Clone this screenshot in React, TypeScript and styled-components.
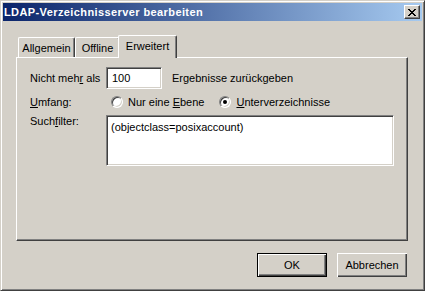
import React from "react";
import styled, { createGlobalStyle } from "styled-components";

const FACE = "#d4d0c8";
const FONT = `"Liberation Sans", Arial, sans-serif`;

const Global = createGlobalStyle`
  html, body { margin: 0; padding: 0; background: ${FACE}; }
  body { font-family: ${FONT}; font-size: 11px; color: #000; }
  * { box-sizing: border-box; }
`;

const Window = styled.div`
  width: 425px;
  height: 291px;
  display: flex;
  flex-direction: column;
  background: ${FACE};
  border: 1px solid;
  border-color: ${FACE} #404040 #404040 ${FACE};
  box-shadow: inset 1px 1px #fff, inset -1px -1px #808080;
  padding: 2px;
`;

const TitleBar = styled.div`
  height: 18px;
  flex: none;
  display: flex;
  align-items: center;
  justify-content: space-between;
  padding: 0 2px 0 1px;
  background: linear-gradient(to right, #0a246a, #a6caf0);
`;

const Title = styled.span`
  color: #fff;
  font-weight: bold;
  font-size: 11px;
  letter-spacing: 0.4px;
  white-space: nowrap;
`;

const CloseButton = styled.div`
  width: 16px;
  height: 14px;
  display: flex;
  align-items: center;
  justify-content: center;
  background: ${FACE};
  border: 1px solid;
  border-color: #fff #404040 #404040 #fff;
  box-shadow: inset -1px -1px #808080;
`;

const Client = styled.div`
  flex: 1;
  display: flex;
  flex-direction: column;
  padding: 14px 14px 11px 13px;
`;

const TabStrip = styled.div`
  display: flex;
  align-items: flex-end;
  height: 22px;
  padding-left: 2px;
  position: relative;
  z-index: 1;
`;

const Tab = styled.div<{ $active?: boolean; $w: number }>`
  width: ${(p) => p.$w}px;
  flex: none;
  height: ${(p) => (p.$active ? 23 : 20)}px;
  margin: 0 ${(p) => (p.$active ? -2 : 0)}px ${(p) => (p.$active ? -1 : 0)}px;
  display: flex;
  align-items: center;
  justify-content: center;
  padding-bottom: ${(p) => (p.$active ? 2 : 0)}px;
  background: ${FACE};
  border-top: 1px solid #fff;
  border-left: 1px solid #fff;
  border-right: 1px solid #404040;
  box-shadow: inset -1px 0 #808080;
  border-top-left-radius: 2px;
  border-top-right-radius: 2px;
  white-space: nowrap;
  position: relative;
  z-index: ${(p) => (p.$active ? 2 : 1)};
`;

const Panel = styled.div`
  flex: 1;
  border: 1px solid;
  border-color: #fff #404040 #404040 #fff;
  box-shadow: inset -1px -1px #808080;
  padding: 9px 12px 0 13px;
  display: flex;
  flex-direction: column;
`;

const Row = styled.div<{ $top?: boolean }>`
  display: flex;
  align-items: ${(p) => (p.$top ? "flex-start" : "center")};
`;

const Label = styled.span<{ $offset?: number }>`
  width: 76px;
  flex: none;
  white-space: nowrap;
  padding-top: ${(p) => p.$offset ?? 0}px;
`;

const Edit = styled.input`
  width: 56px;
  height: 22px;
  font: 11px ${FONT};
  color: #000;
  background: #fff;
  border: 1px solid;
  border-color: #808080 #fff #fff #808080;
  box-shadow: inset 1px 1px #404040, inset -1px -1px ${FACE};
  padding: 0 0 0 5px;
  outline: none;
`;

const TextArea = styled.textarea`
  flex: 1;
  height: 51px;
  margin-right: 1px;
  resize: none;
  font: 11px ${FONT};
  color: #000;
  background: #fff;
  border: 1px solid;
  border-color: #808080 #fff #fff #808080;
  box-shadow: inset 1px 1px #404040, inset -1px -1px ${FACE};
  padding: 5px 4px;
  outline: none;
  overflow: hidden;
`;

const After = styled.span`
  margin-left: 10px;
  white-space: nowrap;
`;

const RadioOption = styled.label<{ $first?: boolean }>`
  display: flex;
  align-items: center;
  gap: 5px;
  margin-left: ${(p) => (p.$first ? 5 : 15)}px;
  white-space: nowrap;
`;

const RadioCircle = styled.span<{ $checked?: boolean }>`
  width: 12px;
  height: 12px;
  border-radius: 50%;
  border: 1px solid;
  border-color: #808080 #fff #fff #808080;
  background: #fff;
  box-shadow: inset 1px 1px #404040, inset -1px -1px ${FACE};
  display: flex;
  align-items: center;
  justify-content: center;
  &::after {
    content: "";
    width: 4px;
    height: 4px;
    border-radius: 50%;
    background: ${(p) => (p.$checked ? "#000" : "transparent")};
  }
`;

const ButtonRow = styled.div`
  display: flex;
  justify-content: flex-end;
  gap: 10px;
  margin-top: 12px;
  padding-right: 1px;
`;

const Button = styled.div<{ $default?: boolean }>`
  width: 70px;
  height: 24px;
  display: flex;
  align-items: center;
  justify-content: center;
  background: ${FACE};
  border: ${(p) => (p.$default ? "1px solid #000" : "none")};
  box-shadow: inset 1px 1px #fff, inset -1px -1px #404040, inset -2px -2px #808080;
`;

const U = styled.u`
  text-decoration: underline;
  text-underline-offset: 1px;
`;

const Gap = styled.div<{ $h: number }>`
  height: ${(p) => p.$h}px;
  flex: none;
`;

export default function App() {
  return (
    <>
      <Global />
      <Window>
        <TitleBar>
          <Title>LDAP-Verzeichnisserver bearbeiten</Title>
          <CloseButton>
            <svg width="8" height="7" viewBox="0 0 8 7" shapeRendering="crispEdges">
              <path
                d="M0 0h2v1H0zM6 0h2v1H6zM1 1h2v1H1zM5 1h2v1H5zM2 2h4v1H2zM3 3h2v1H3zM2 4h4v1H2zM1 5h2v1H1zM5 5h2v1H5zM0 6h2v1H0zM6 6h2v1H6z"
                fill="#000"
              />
            </svg>
          </CloseButton>
        </TitleBar>
        <Client>
          <TabStrip>
            <Tab $w={57}>Allgemein</Tab>
            <Tab $w={45}>Offline</Tab>
            <Tab $w={59} $active>
              Erweitert
            </Tab>
          </TabStrip>
          <Panel>
            <Row>
              <Label>
                Nicht meh<U>r</U> als
              </Label>
              <Edit readOnly defaultValue="100" />
              <After>Ergebnisse zurückgeben</After>
            </Row>
            <Gap $h={7} />
            <Row>
              <Label>
                <U>U</U>mfang:
              </Label>
              <RadioOption $first>
                <RadioCircle />
                <span>
                  Nur eine <U>E</U>bene
                </span>
              </RadioOption>
              <RadioOption>
                <RadioCircle $checked />
                <span>
                  <U>U</U>nterverzeichnisse
                </span>
              </RadioOption>
            </Row>
            <Gap $h={7} />
            <Row $top>
              <Label $offset={0}>
                Such<U>f</U>ilter:
              </Label>
              <TextArea readOnly defaultValue="(objectclass=posixaccount)" />
            </Row>
          </Panel>
          <ButtonRow>
            <Button $default>OK</Button>
            <Button>Abbrechen</Button>
          </ButtonRow>
        </Client>
      </Window>
    </>
  );
}
